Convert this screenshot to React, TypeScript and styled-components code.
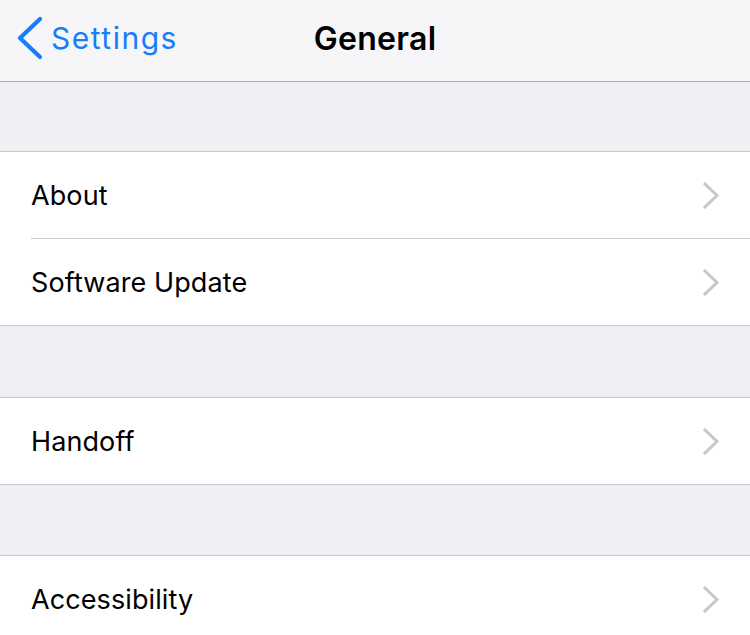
import React from "react";
import styled, { createGlobalStyle } from "styled-components";

const Global = createGlobalStyle`
  html, body { margin: 0; padding: 0; background: #efeff4; overflow: hidden; }
  body { font-family: Inter, "Noto Sans", "Liberation Sans", sans-serif; -webkit-font-smoothing: antialiased; }
`;

const Page = styled.div`
  width: 750px;
  min-height: 635px;
  background: #efeff4;
`;

const NavBar = styled.header`
  height: 81px;
  border-bottom: 1px solid #a9a9ad;
  background: #f6f6f8;
  display: grid;
  grid-template-columns: 1fr auto 1fr;
  align-items: center;
`;

const Back = styled.div`
  display: flex;
  align-items: center;
  gap: 7px;
  padding-left: 16px;
  padding-bottom: 6px;
  color: #157efb;
  font-size: 30px;
  letter-spacing: 1.5px;
`;

const Title = styled.h1`
  margin: 0;
  padding-bottom: 4px;
  font-size: 32px;
  font-weight: 600;
  color: #000;
  letter-spacing: 0.3px;
`;

const Spacer = styled.div<{ $h: number }>`
  height: ${(p) => p.$h}px;
`;

const Group = styled.section`
  background: #fff;
  border-top: 1px solid #c8c7cc;
  border-bottom: 1px solid #c8c7cc;
`;

const Row = styled.div<{ $last?: boolean }>`
  height: 86px;
  margin-left: 31px;
  padding-right: 30px;
  display: flex;
  align-items: center;
  justify-content: space-between;
  border-bottom: ${(p) => (p.$last ? "none" : "1px solid #c8c7cc")};
`;

const Label = styled.span`
  font-size: 27px;
  color: #000;
  letter-spacing: 0.1px;
`;

const BackChevron = () => (
  <svg width="28" height="44" viewBox="0 0 28 44">
    <path d="M24 3 L4 22 L24 41" fill="none" stroke="#157efb" strokeWidth="4.2" strokeLinecap="round" strokeLinejoin="round" />
  </svg>
);

const Chevron = () => (
  <svg width="17" height="27" viewBox="0 0 17 27">
    <path d="M2 2 L14 13.5 L2 25" fill="none" stroke="#c7c7cc" strokeWidth="3" strokeLinecap="square" />
  </svg>
);

const groups = [["About", "Software Update"], ["Handoff"], ["Accessibility"]];
const gaps = [69, 71, 70];

export default function App() {
  return (
    <Page>
      <Global />
      <NavBar>
        <Back>
          <BackChevron />
          <span>Settings</span>
        </Back>
        <Title>General</Title>
        <div />
      </NavBar>
      {groups.map((g, gi) => (
        <React.Fragment key={gi}>
          <Spacer $h={gaps[gi]} />
          <Group>
            {g.map((label, i) => (
              <Row key={label} $last={i === g.length - 1}>
                <Label>{label}</Label>
                <Chevron />
              </Row>
            ))}
          </Group>
        </React.Fragment>
      ))}
    </Page>
  );
}
